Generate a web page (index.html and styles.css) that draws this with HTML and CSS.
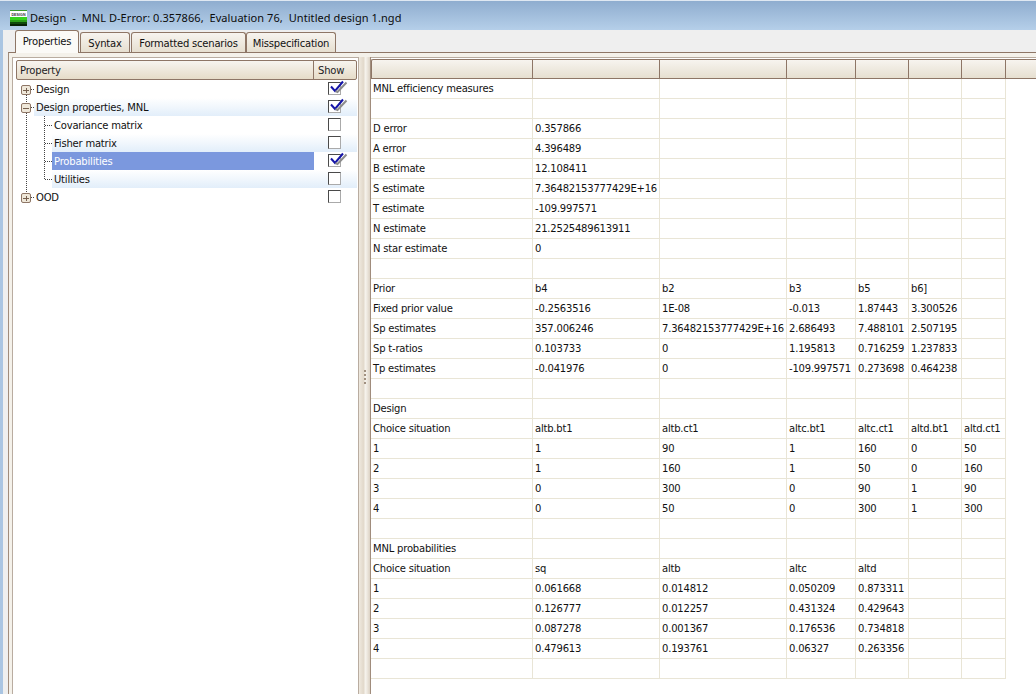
FILE: index.html
```html
<!DOCTYPE html>
<html lang="en">
<head>
<meta charset="utf-8">
<title>Design</title>
<link rel="stylesheet" href="styles.css">
</head>
<body>
<svg class="defs" width="0" height="0">
  <symbol id="tick" viewBox="0 0 19 15">
    <path d="M2 6.500l4 4.500 8-9.500" stroke="#1414a8" stroke-width="2" fill="none"/>
    <path d="M6.500 11l2 1L17.500 2.500" stroke="#8c8c8c" stroke-width="2" fill="none"/>
  </symbol>
</svg>
<div class="window">
  <header class="titlebar">
    <svg class="appicon" width="17" height="16" viewBox="0 0 17 16">
      <rect width="17" height="1" fill="#3a9a2a"/>
      <rect y="1" width="17" height="6" fill="#fff"/>
      <text class="icontext" x="8.500" y="6" text-anchor="middle">DESIGN</text>
      <rect y="7" width="17" height="5" fill="#35d21c"/>
      <rect y="10" width="17" height="2" fill="#2a9e18"/>
      <rect y="12" width="17" height="2" fill="#0f4a0a"/>
      <rect y="14" width="17" height="2" fill="#062205"/>
    </svg>
    <span class="title">Design &nbsp;-&nbsp; MNL D-Error: 0.357866, &nbsp;Evaluation 76, &nbsp;Untitled design 1.ngd</span>
  </header>
  <div class="frame">
    <nav class="tabstrip">
      <div class="tab active">Properties</div>
      <div class="tab t-syntax">Syntax</div>
      <div class="tab t-scen">Formatted scenarios</div>
      <div class="tab t-miss">Misspecification</div>
    </nav>
    <main class="tabpage">
      <section class="leftpane">
        <div class="treehead">
          <div class="th-prop">Property</div>
          <div class="th-show">Show</div>
        </div>
        <div class="tree">
          <svg class="treelines" width="40" height="125" viewBox="0 0 40 125">
            <path d="M10.500 15V113M28.500 36V100M15 9.500h3M15 27.500h3M29 45.500h7M29 63.500h7M29 81.500h7M29 99.500h7M15 117.500h3" stroke="#444" stroke-dasharray="1 1" fill="none" shape-rendering="crispEdges"/>
            <g fill="#efe8da" stroke="#8e7666"><rect x="5.500" y="5.500" width="9" height="9" rx="1.500"/><rect x="5.500" y="23.500" width="9" height="9" rx="1.500"/><rect x="5.500" y="113.500" width="9" height="9" rx="1.500"/></g>
            <path d="M7 10.500h6M10.500 8v5M7 28.500h6M7 118.500h6M10.500 116v5" stroke="#76604f" fill="none" shape-rendering="crispEdges"/>
          </svg>
          <div class="row r0"><span class="label">Design</span><span class="cell-show"><span class="check"><svg class="tick" width="19" height="15"><use href="#tick"/></svg></span></span></div>
          <div class="row r0 alt"><span class="label">Design properties, MNL</span><span class="cell-show"><span class="check"><svg class="tick" width="19" height="15"><use href="#tick"/></svg></span></span></div>
          <div class="row r1"><span class="label">Covariance matrix</span><span class="cell-show"><span class="check"></span></span></div>
          <div class="row r1 alt"><span class="label">Fisher matrix</span><span class="cell-show"><span class="check"></span></span></div>
          <div class="row r1"><span class="label selected">Probabilities</span><span class="cell-show"><span class="check"><svg class="tick" width="19" height="15"><use href="#tick"/></svg></span></span></div>
          <div class="row r1 alt"><span class="label">Utilities</span><span class="cell-show"><span class="check"></span></span></div>
          <div class="row r0"><span class="label">OOD</span><span class="cell-show"><span class="check"></span></span></div>
        </div>
      </section>
      <div class="splitter"><span class="grip"></span></div>
      <section class="rightpane">
        <div class="gridhead">
          <div class="gh c1"></div><div class="gh c2"></div><div class="gh c3"></div><div class="gh c4"></div><div class="gh c5"></div><div class="gh c6"></div><div class="gh c7"></div><div class="gh filler"></div>
        </div>
        <table class="grid">
          <colgroup><col class="c1"><col class="c2"><col class="c3"><col class="c4"><col class="c5"><col class="c6"><col class="c7"></colgroup>
          <tbody>
            <tr><td>MNL efficiency measures</td><td></td><td></td><td></td><td></td><td></td><td></td></tr>
            <tr><td></td><td></td><td></td><td></td><td></td><td></td><td></td></tr>
            <tr><td>D error</td><td>0.357866</td><td></td><td></td><td></td><td></td><td></td></tr>
            <tr><td>A error</td><td>4.396489</td><td></td><td></td><td></td><td></td><td></td></tr>
            <tr><td>B estimate</td><td>12.108411</td><td></td><td></td><td></td><td></td><td></td></tr>
            <tr><td>S estimate</td><td class="over">7.36482153777429E+16</td><td></td><td></td><td></td><td></td><td></td></tr>
            <tr><td>T estimate</td><td>-109.997571</td><td></td><td></td><td></td><td></td><td></td></tr>
            <tr><td>N estimate</td><td>21.2525489613911</td><td></td><td></td><td></td><td></td><td></td></tr>
            <tr><td>N star estimate</td><td>0</td><td></td><td></td><td></td><td></td><td></td></tr>
            <tr><td></td><td></td><td></td><td></td><td></td><td></td><td></td></tr>
            <tr><td>Prior</td><td>b4</td><td>b2</td><td>b3</td><td>b5</td><td>b6]</td><td></td></tr>
            <tr><td>Fixed prior value</td><td>-0.2563516</td><td>1E-08</td><td>-0.013</td><td>1.87443</td><td>3.300526</td><td></td></tr>
            <tr><td>Sp estimates</td><td>357.006246</td><td class="over">7.36482153777429E+16</td><td>2.686493</td><td>7.488101</td><td>2.507195</td><td></td></tr>
            <tr><td>Sp t-ratios</td><td>0.103733</td><td>0</td><td>1.195813</td><td>0.716259</td><td>1.237833</td><td></td></tr>
            <tr><td>Tp estimates</td><td>-0.041976</td><td>0</td><td>-109.997571</td><td>0.273698</td><td>0.464238</td><td></td></tr>
            <tr><td></td><td></td><td></td><td></td><td></td><td></td><td></td></tr>
            <tr><td>Design</td><td></td><td></td><td></td><td></td><td></td><td></td></tr>
            <tr><td>Choice situation</td><td>altb.bt1</td><td>altb.ct1</td><td>altc.bt1</td><td>altc.ct1</td><td>altd.bt1</td><td>altd.ct1</td></tr>
            <tr><td>1</td><td>1</td><td>90</td><td>1</td><td>160</td><td>0</td><td>50</td></tr>
            <tr><td>2</td><td>1</td><td>160</td><td>1</td><td>50</td><td>0</td><td>160</td></tr>
            <tr><td>3</td><td>0</td><td>300</td><td>0</td><td>90</td><td>1</td><td>90</td></tr>
            <tr><td>4</td><td>0</td><td>50</td><td>0</td><td>300</td><td>1</td><td>300</td></tr>
            <tr><td></td><td></td><td></td><td></td><td></td><td></td><td></td></tr>
            <tr><td>MNL probabilities</td><td></td><td></td><td></td><td></td><td></td><td></td></tr>
            <tr><td>Choice situation</td><td>sq</td><td>altb</td><td>altc</td><td>altd</td><td></td><td></td></tr>
            <tr><td>1</td><td>0.061668</td><td>0.014812</td><td>0.050209</td><td>0.873311</td><td></td><td></td></tr>
            <tr><td>2</td><td>0.126777</td><td>0.012257</td><td>0.431324</td><td>0.429643</td><td></td><td></td></tr>
            <tr><td>3</td><td>0.087278</td><td>0.001367</td><td>0.176536</td><td>0.734818</td><td></td><td></td></tr>
            <tr><td>4</td><td>0.479613</td><td>0.193761</td><td>0.06327</td><td>0.263356</td><td></td><td></td></tr>
            <tr><td></td><td></td><td></td><td></td><td></td><td></td><td></td></tr>
          </tbody>
        </table>
      </section>
    </main>
  </div>
</div>
</body>
</html>
```
FILE: styles.css
```css
* { box-sizing: border-box; }
html, body { margin: 0; height: 100%; overflow: hidden; }
body { font: 10px/1 "DejaVu Sans", sans-serif; letter-spacing: -0.2px; color: #111; background: #efefef; }
.defs { position: absolute; }
.window { width: 1036px; height: 694px; display: flex; flex-direction: column; }
.titlebar { height: 30px; flex: none; display: flex; align-items: center; gap: 3px; padding: 4px 0 0 10px; background: linear-gradient(#8fadcf, #b5cfe9); border-top: 1px solid #dfe8f2; font: 11px/1 "Noto Sans", sans-serif; letter-spacing: 0.07px; color: #0c0c0c; }
.appicon { flex: none; }
.icontext { font: bold 3.6px "Liberation Sans", sans-serif; fill: #333; }
.title { white-space: nowrap; }
.frame { flex: 1; min-height: 0; display: flex; flex-direction: column; border-left: 3px solid #aac5e2; padding-left: 5px; background: #efefef; }
.tabstrip { height: 22px; flex: none; display: flex; align-items: flex-end; padding-left: 7px; }
.tab { height: 20px; padding-top: 6px; text-align: center; border: 1px solid #8e7666; border-bottom: 0; border-radius: 3px 3px 0 0; background: linear-gradient(#f7f4ef, #e6dfd0); white-space: nowrap; }
.tab.active { width: 64px; height: 23px; margin-bottom: -1px; background: #fbfaf7; position: relative; z-index: 1; }
.t-syntax { width: 50px; margin-left: 1px; }
.t-scen { width: 115px; margin-left: 1px; }
.t-miss { width: 90px; }
.tabpage { flex: 1; min-height: 0; display: flex; padding: 4px 0 0 3px; background: #f4f1ea; border-top: 1px solid #8e7666; border-left: 1px solid #a08c7c; }
.leftpane { width: 347px; flex: none; background: #fff; border: 1px solid #b9aca0; border-bottom: 0; padding: 2px 1px 0 3px; }
.treehead { height: 20px; display: flex; border: 1px solid #8e7666; border-radius: 2px; background: linear-gradient(#f7f4ef, #e6dcc8); color: #222; line-height: 19px; }
.th-prop { width: 297px; padding-left: 3px; border-right: 1px solid #8e7666; }
.th-show { flex: 1; padding-left: 4px; }
.tree { position: relative; }
.treelines { position: absolute; left: 0; top: 0; pointer-events: none; }
.row { height: 18px; display: flex; }
.row.r0 { margin-left: 18px; }
.row.r1 { margin-left: 36px; }
.row.alt { background: linear-gradient(#fff, #e2eefa); }
.label { flex: 1; padding-left: 2px; line-height: 20px; white-space: nowrap; }
.selected { background: #7b98de; color: #fff; }
.cell-show { flex: none; width: 43px; padding: 2px 0 0 14px; }
.check { display: block; position: relative; width: 13px; height: 13px; border: 1px solid #4a4a4a; border-right-color: #aaa; border-bottom-color: #aaa; background: #fff; }
.tick { position: absolute; left: 0; top: -3px; }
.splitter { width: 12px; flex: none; display: flex; align-items: center; justify-content: center; background: linear-gradient(90deg, #efe9df, #e2d9cb 40%, #f6f3ed 60%, #dcd2c4); border-right: 1px solid #a08c7c; }
.grip { width: 2px; height: 14px; margin-top: 2px; background: repeating-linear-gradient(#a09080 0 2px, transparent 2px 4px); }
.rightpane { flex: 1; min-width: 0; background: #fff; border-top: 1px solid #b9aca0; padding-top: 1px; }
.gridhead { height: 20px; display: flex; background: linear-gradient(#f7f4ef, #e6dfd0); border-top: 1px solid #8e7666; border-bottom: 1px solid #8e7666; border-left: 1px solid #8e7666; border-radius: 2px 0 0 0; }
.gh { flex: none; border-right: 1px solid #8e7666; }
.gh.filler { flex: 1; border: 0; }
.gh.c1 { width: 161px; } .gh.c2 { width: 127px; } .gh.c3 { width: 127px; } .gh.c4 { width: 69px; } .gh.c5 { width: 53px; } .gh.c6 { width: 53px; } .gh.c7 { width: 44px; }
.grid { table-layout: fixed; width: 635px; border-collapse: separate; border-spacing: 0; color: #111; }
col.c1 { width: 162px; } col.c2 { width: 127px; } col.c3 { width: 127px; } col.c4 { width: 69px; } col.c5 { width: 53px; } col.c6 { width: 53px; } col.c7 { width: 44px; }
.grid td { height: 20px; padding: 0 0 0 2px; border-right: 1px solid #e9e5d6; border-bottom: 1px solid #e9e5d6; white-space: nowrap; overflow: hidden; }
.grid td.over { overflow: visible; }
```
